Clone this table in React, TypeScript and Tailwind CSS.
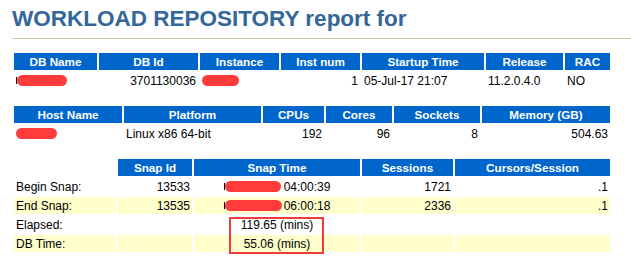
import React from "react";

const font = "font-['Liberation_Sans',Arial,Helvetica,sans-serif]";

function Blob({ w }: { w: number }) {
  // red redaction smear
  return (
    <span
      className="inline-block h-[11px] rounded-full bg-[#ff3b3b] blur-[0.4px] align-middle"
      style={{ width: w }}
    />
  );
}

function Th({ children }: { children?: React.ReactNode }) {
  return (
    <div className="h-[17px] bg-[#0066CC] text-white font-bold text-[11.7px] leading-[17px] text-center whitespace-nowrap">
      {children}
    </div>
  );
}

function Td({
  children,
  align = "left",
  alt = false,
}: {
  children?: React.ReactNode;
  align?: "left" | "right" | "center";
  alt?: boolean;
}) {
  const a = align === "right" ? "justify-end" : align === "center" ? "justify-center" : "justify-start";
  return (
    <div
      className={`h-[17px] flex items-center px-[2px] text-[12px] text-black whitespace-nowrap ${a} ${alt ? "bg-[#FFFFCC]" : "bg-white"}`}
    >
      {children}
    </div>
  );
}

export default function App() {
  return (
    <div className={`relative w-[631px] h-[270px] bg-white overflow-hidden ${font}`}>
      <div className="pl-[12px] pt-[6px]">
        <h1 className="text-[22.5px] leading-[26px] font-bold text-[#336699] pb-[6px] border-b border-[#cccc99] whitespace-nowrap">
          WORKLOAD REPOSITORY report for
        </h1>
      </div>

      <div className="pl-[12px] mt-[12px] flex flex-col">
        {/* instance */}
        <div className="grid grid-cols-[83px_99px_79px_79px_122px_77px_45px] gap-[2px] p-[2px] w-fit">
          <Th>DB Name</Th>
          <Th>DB Id</Th>
          <Th>Instance</Th>
          <Th>Inst num</Th>
          <Th>Startup Time</Th>
          <Th>Release</Th>
          <Th>RAC</Th>
          <Td>
            <span className="w-[1px] h-[7px] bg-black" />
            <Blob w={50} />
          </Td>
          <Td align="right">3701130036</Td>
          <Td>
            <Blob w={37} />
          </Td>
          <Td align="right">1</Td>
          <Td>05-Jul-17 21:07</Td>
          <Td>11.2.0.4.0</Td>
          <Td>NO</Td>
        </div>

        {/* host */}
        <div className="grid grid-cols-[108px_137px_61px_66px_86px_128px] gap-[2px] p-[2px] w-fit mt-[13px]">
          <Th>Host Name</Th>
          <Th>Platform</Th>
          <Th>CPUs</Th>
          <Th>Cores</Th>
          <Th>Sockets</Th>
          <Th>Memory (GB)</Th>
          <Td>
            <Blob w={41} />
          </Td>
          <Td>Linux x86 64-bit</Td>
          <Td align="right">192</Td>
          <Td align="right">96</Td>
          <Td align="right">8</Td>
          <Td align="right">504.63</Td>
        </div>

        {/* snapshots */}
        <div className="grid grid-cols-[102px_74px_166px_91px_155px] gap-[2px] p-[2px] w-fit mt-[13px]">
          <div />
          <Th>Snap Id</Th>
          <Th>Snap Time</Th>
          <Th>Sessions</Th>
          <Th>Cursors/Session</Th>

          <Td>Begin Snap:</Td>
          <Td align="right">13533</Td>
          <Td align="center">
            <span className="w-[1px] h-[7px] bg-black" />
            <Blob w={56} />
            <span className="ml-[3px]">04:00:39</span>
          </Td>
          <Td align="right">1721</Td>
          <Td align="right">.1</Td>

          <Td alt>End Snap:</Td>
          <Td alt align="right">13535</Td>
          <Td alt align="center">
            <span className="w-[1px] h-[7px] bg-black" />
            <Blob w={57} />
            <span className="ml-[2px]">06:00:18</span>
          </Td>
          <Td alt align="right">2336</Td>
          <Td alt align="right">.1</Td>

          <Td>Elapsed:</Td>
          <Td />
          <Td align="center">119.65 (mins)</Td>
          <Td />
          <Td />

          <Td alt>DB Time:</Td>
          <Td alt />
          <Td alt align="center">55.06 (mins)</Td>
          <Td alt />
          <Td alt />
        </div>
      </div>

      {/* highlight box */}
      <div className="absolute left-[229px] top-[217px] w-[95px] h-[37px] border-2 border-[#ee3b3b]" />
    </div>
  );
}
